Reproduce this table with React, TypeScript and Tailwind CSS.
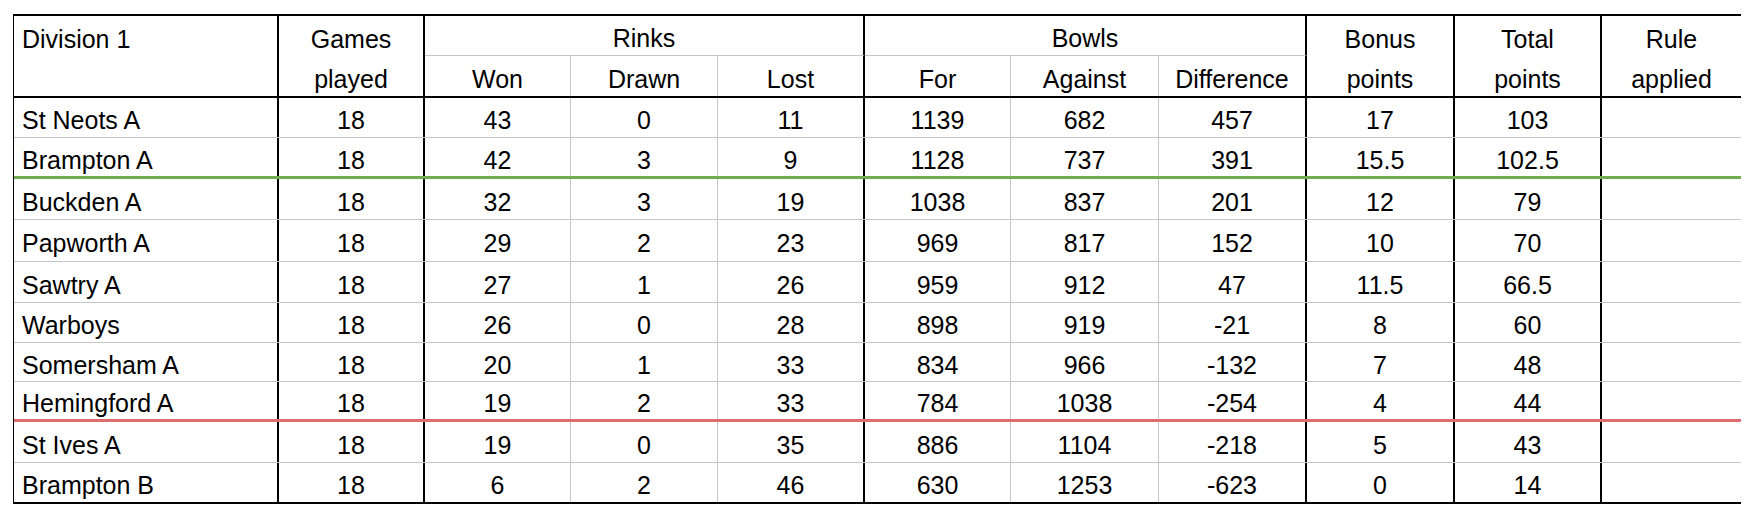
const COLS =
  "grid grid-cols-[265px_146px_146px_147px_147px_146px_148px_148px_148px_147px_139px]";

type Row = {
  team: string;
  values: string[];
  h: string;
  line: string;
};

const rows: Row[] = [
  { team: "St Neots A", values: ["18", "43", "0", "11", "1139", "682", "457", "17", "103", ""], h: "h-[40px]", line: "border-b border-[#c6c6c6]" },
  { team: "Brampton A", values: ["18", "42", "3", "9", "1128", "737", "391", "15.5", "102.5", ""], h: "h-[41px]", line: "border-b-[3px] border-[#72ac4f]" },
  { team: "Buckden A", values: ["18", "32", "3", "19", "1038", "837", "201", "12", "79", ""], h: "h-[41px]", line: "border-b border-[#c6c6c6]" },
  { team: "Papworth A", values: ["18", "29", "2", "23", "969", "817", "152", "10", "70", ""], h: "h-[42px]", line: "border-b border-[#c6c6c6]" },
  { team: "Sawtry A", values: ["18", "27", "1", "26", "959", "912", "47", "11.5", "66.5", ""], h: "h-[41px]", line: "border-b border-[#c6c6c6]" },
  { team: "Warboys", values: ["18", "26", "0", "28", "898", "919", "-21", "8", "60", ""], h: "h-[40px]", line: "border-b border-[#c6c6c6]" },
  { team: "Somersham A", values: ["18", "20", "1", "33", "834", "966", "-132", "7", "48", ""], h: "h-[39px]", line: "border-b border-[#c6c6c6]" },
  { team: "Hemingford A", values: ["18", "19", "2", "33", "784", "1038", "-254", "4", "44", ""], h: "h-[40px]", line: "border-b-[3px] border-[#dc6e71]" },
  { team: "St Ives A", values: ["18", "19", "0", "35", "886", "1104", "-218", "5", "43", ""], h: "h-[41px]", line: "border-b border-[#c6c6c6]" },
  { team: "Brampton B", values: ["18", "6", "2", "46", "630", "1253", "-623", "0", "14", ""], h: "h-[39px]", line: "" },
];

// right edge of each value column: black, grey or nothing
const edges = [
  "border-r-2 border-black",
  "border-r border-[#c6c6c6]",
  "border-r border-[#c6c6c6]",
  "border-r-2 border-black",
  "border-r border-[#c6c6c6]",
  "border-r border-[#c6c6c6]",
  "border-r-2 border-black",
  "border-r-2 border-black",
  "border-r-2 border-black",
  "",
];

function Stack({ lines, className, left }: { lines: string[]; className: string; left?: boolean }) {
  return (
    <div className={`row-span-2 flex flex-col ${className}`}>
      {lines.map((l, i) => (
        <div
          key={i}
          className={`h-[40px] pt-[6px] flex items-center ${left ? "pl-[8px]" : "justify-center"}`}
        >
          {l}
        </div>
      ))}
    </div>
  );
}

export default function App() {
  return (
    <div
      className="bg-white min-h-[520px] pt-[14px] pl-[13px] text-black text-[25px] leading-none"
      style={{ fontFamily: '"Liberation Sans", Arial, sans-serif' }}
    >
      <div className="w-[1728px] border-t-2 border-l border-b-2 border-black">
        {/* header */}
        <div className={`${COLS} grid-rows-[40px_40px] border-b-2 border-black`}>
          <Stack lines={["Division 1"]} className="border-r-2 border-black" left />
          <Stack lines={["Games", "played"]} className="border-r-2 border-black" />
          <div className="col-span-3 pt-[6px] flex items-center justify-center border-b border-[#c6c6c6] border-r-2 border-r-black">
            Rinks
          </div>
          <div className="col-span-3 pt-[6px] flex items-center justify-center border-b border-[#c6c6c6] border-r-2 border-r-black">
            Bowls
          </div>
          <Stack lines={["Bonus", "points"]} className="border-r-2 border-black" />
          <Stack lines={["Total", "points"]} className="border-r-2 border-black" />
          <Stack lines={["Rule", "applied"]} className="" />
          <div className="pt-[6px] flex items-center justify-center border-r border-[#c6c6c6]">Won</div>
          <div className="pt-[6px] flex items-center justify-center border-r border-[#c6c6c6]">Drawn</div>
          <div className="pt-[6px] flex items-center justify-center border-r-2 border-black">Lost</div>
          <div className="pt-[6px] flex items-center justify-center border-r border-[#c6c6c6]">For</div>
          <div className="pt-[6px] flex items-center justify-center border-r border-[#c6c6c6]">Against</div>
          <div className="pt-[6px] flex items-center justify-center border-r-2 border-black">Difference</div>
        </div>

        {/* body */}
        {rows.map((r) => (
          <div key={r.team} className={`${COLS} ${r.h} ${r.line}`}>
            <div className="flex items-center pt-[6px] pl-[8px] border-r-2 border-black">{r.team}</div>
            {r.values.map((v, i) => (
              <div key={i} className={`flex items-center justify-center pt-[6px] ${edges[i]}`}>
                {v}
              </div>
            ))}
          </div>
        ))}
      </div>
    </div>
  );
}
